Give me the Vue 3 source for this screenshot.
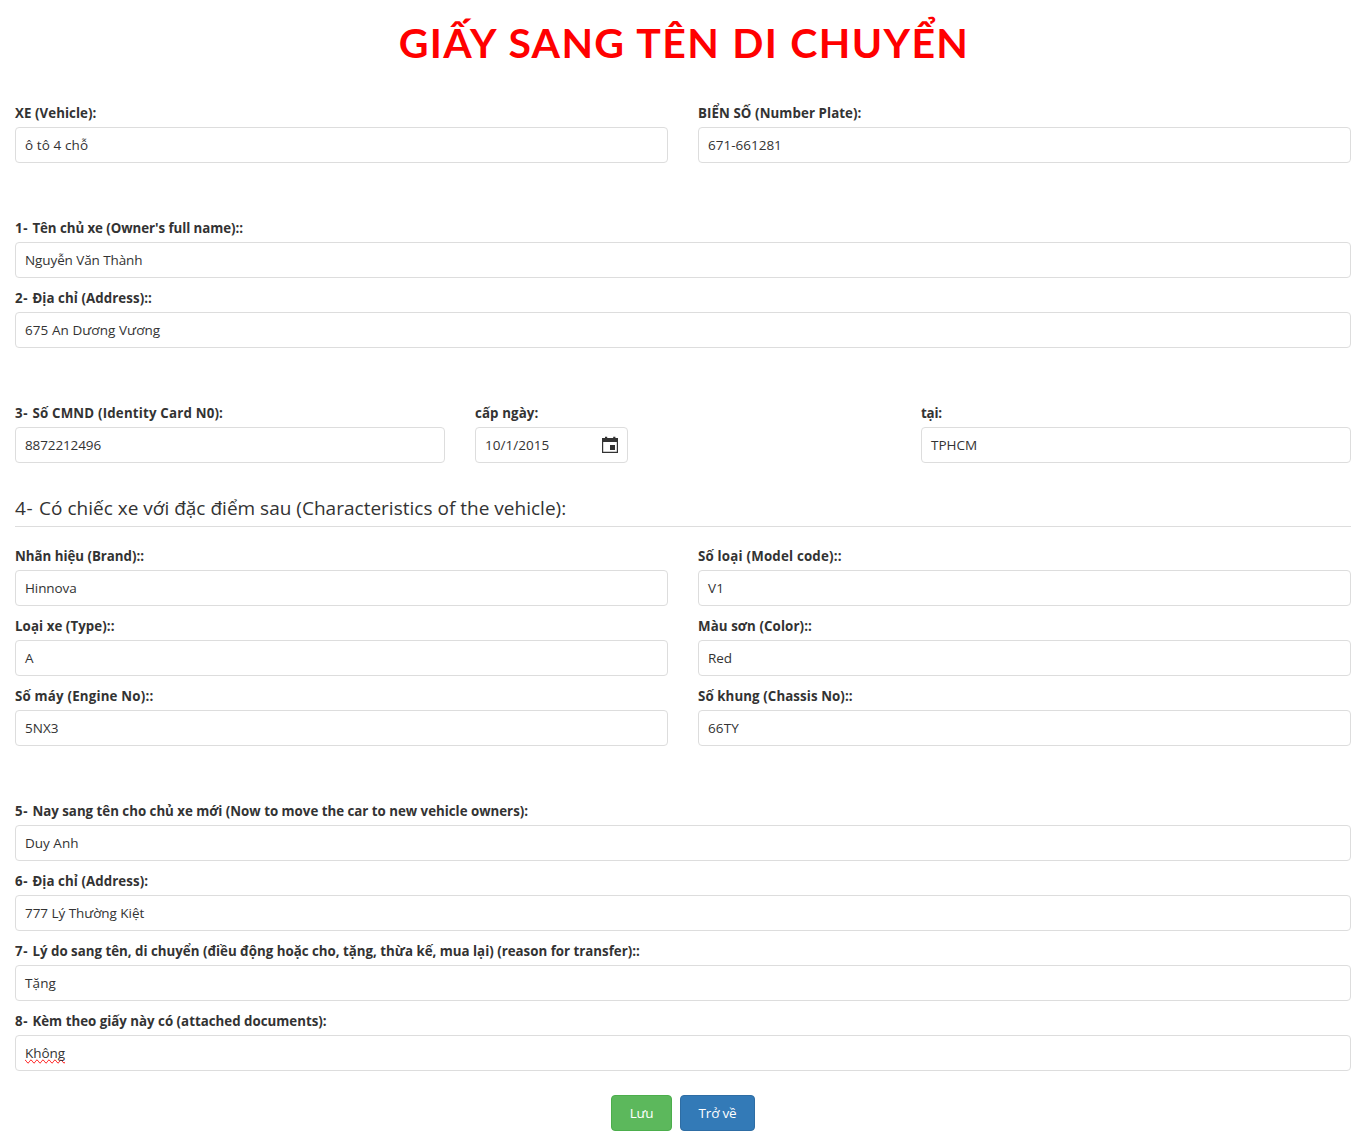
<script setup>
const groups = [
  [
    [
      { label: 'XE (Vehicle):', value: 'ô tô 4 chỗ', ls: 0.06, vs: 0.1 },
      { label: 'BIỂN SỐ (Number Plate):', value: '671-661281', ls: 0.08, vs: 0 },
    ],
  ],
  [
    [{ no: '1- ', label: "Tên chủ xe (Owner's full name)::", value: 'Nguyễn Văn Thành', ls: -0.06, vs: -0.1 }],
    [{ no: '2- ', label: 'Địa chỉ (Address)::', value: '675 An Dương Vương', ls: 0.07, vs: 0.07 }],
  ],
  [
    [
      { no: '3- ', label: 'Số CMND (Identity Card N0):', value: '8872212496', ls: 0.18, vs: -0.12, size: 'wide' },
      { label: 'cấp ngày:', value: '10/1/2015', ls: 0.12, vs: 0.05, size: 'date' },
      { label: 'tại:', value: 'TPHCM', ls: -0.2, vs: 0, size: 'wide' },
    ],
  ],
]

const vehicle = [
  [
    { label: 'Nhãn hiệu (Brand)::', value: 'Hinnova', ls: -0.02, vs: -0.1 },
    { label: 'Số loại (Model code)::', value: 'V1', ls: 0.2, vs: 0.2 },
  ],
  [
    { label: 'Loại xe (Type)::', value: 'A', ls: 0.07, vs: 0 },
    { label: 'Màu sơn (Color)::', value: 'Red', ls: 0.1, vs: -0.1 },
  ],
  [
    { label: 'Số máy (Engine No)::', value: '5NX3', ls: 0.19, vs: 0.05 },
    { label: 'Số khung (Chassis No)::', value: '66TY', ls: 0.09, vs: 0.1 },
  ],
]

const transfer = [
  [{ no: '5- ', label: 'Nay sang tên cho chủ xe mới (Now to move the car to new vehicle owners):', value: 'Duy Anh', ls: -0.01, vs: 0 }],
  [{ no: '6- ', label: 'Địa chỉ (Address):', value: '777 Lý Thường Kiệt', ls: 0.07, vs: -0.05 }],
  [{ no: '7- ', label: 'Lý do sang tên, di chuyển (điều động hoặc cho, tặng, thừa kế, mua lại) (reason for transfer)::', value: 'Tặng', ls: 0, vs: 0.1 }],
  [{ no: '8- ', label: 'Kèm theo giấy này có (attached documents):', value: 'Không', ls: 0, vs: -0.05, misspelled: true }],
]

const sections = [
  ...groups.map((rows) => ({ rows })),
  { no: '4- ', heading: 'Có chiếc xe với đặc điểm sau (Characteristics of the vehicle):', rows: vehicle },
  { rows: transfer },
]
</script>

<template>
  <main class="page">
    <h1 class="title">GIẤY SANG TÊN DI CHUYỂN</h1>

    <section v-for="(section, s) in sections" :key="s" class="section" :class="{ headed: section.heading }">
      <h2 v-if="section.heading" class="legend"><span class="no">{{ section.no }}</span>{{ section.heading }}</h2>
      <div v-for="(row, r) in section.rows" :key="r" class="row">
        <div v-for="field in row" :key="field.label" class="field" :class="field.size">
          <div class="label" :style="{ letterSpacing: field.ls + 'px' }"><span v-if="field.no" class="no">{{ field.no }}</span>{{ field.label }}</div>
          <div class="control">
            <span :class="{ misspelled: field.misspelled }" :style="{ letterSpacing: field.vs + 'px' }">{{ field.value }}</span>
            <svg v-if="field.size === 'date'" class="calendar" width="18" height="18" viewBox="0 0 18 18">
              <path fill="#333" fill-rule="evenodd" d="M4 .7h2.2V2h6V.7h2.2V2H17v15H1V2h3zM2.2 6v9.8h13.6V6z" />
              <path fill="#333" d="M9 9h5v5H9z" />
            </svg>
          </div>
        </div>
      </div>
    </section>

    <div class="actions">
      <button type="button" class="btn save">Lưu</button>
      <button type="button" class="btn back">Trở về</button>
    </div>
  </main>
</template>

<style>
body {
  margin: 0;
  background: #fff;
}
</style>

<style scoped>
.page {
  box-sizing: border-box;
  height: 1135px;
  padding: 0 15px;
  overflow: hidden;
  color: #333;
  font-family: "Open Sans", "Noto Sans", sans-serif;
  font-size: 13.5px;
}
.title {
  box-sizing: border-box;
  height: 75px;
  margin: 0;
  padding: 18px 0 0 2px;
  line-height: 50px;
  text-align: center;
  color: #f00;
  font-family: Lato, sans-serif;
  font-size: 41px;
  font-weight: 700;
  letter-spacing: 1.34px;
  word-spacing: 0.8px;
  white-space: nowrap;
}
.section {
  margin-bottom: 45px;
}
.title + .section {
  margin-top: 18px;
}
.section:has(+ .headed) {
  margin-bottom: 28px;
}
.section:has(+ .actions) {
  margin-bottom: 24px;
}
/* the first row's own top padding is part of the gap between sections */
.section > .row:first-child {
  padding-top: 0;
}
.title + .section > .row:first-child {
  padding-top: 10px;
}
.legend {
  box-sizing: border-box;
  height: 36px;
  margin: 0 0 9px;
  border-bottom: 1px solid #ddd;
  font-size: 19px;
  font-weight: 400;
  line-height: 34px;
  letter-spacing: 0.01px;
}
.no {
  letter-spacing: 0.7px;
}
.row {
  display: flex;
  gap: 30px;
  padding-top: 10px;
}
.section:not(.headed) + .section:not(.headed) > .row:first-child,
.headed + .section > .row:first-child {
  padding-top: 10px;
}
.field {
  flex: 1 1 0;
  min-width: 0;
}
.field.wide {
  flex: 0 0 430px;
}
.field.wide:last-child {
  margin-left: auto;
}
.field.date {
  flex: 0 0 153px;
}
.label {
  height: 24px;
  line-height: 20px;
  font-size: 13.3px;
  font-weight: 700;
  white-space: nowrap;
}
.control {
  box-sizing: border-box;
  display: flex;
  align-items: center;
  justify-content: space-between;
  height: 36px;
  padding: 0 8px 0 9px;
  border: 1px solid #ddd;
  border-radius: 4px;
  white-space: nowrap;
}
.misspelled {
  text-decoration: underline wavy #f00 1px;
  text-decoration: spelling-error;
}
.calendar {
  display: block;
}
.actions {
  display: flex;
  justify-content: center;
  gap: 8px;
}
.btn {
  box-sizing: border-box;
  height: 36px;
  padding: 0;
  border: 1px solid;
  border-radius: 4px;
  color: #fff;
  font: inherit;
  letter-spacing: -0.2px;
}
.save {
  width: 61px;
  border-color: #4cae4c;
  background: #5cb85c;
}
.back {
  width: 75px;
  border-color: #2e6da4;
  background: #337ab7;
}
</style>
